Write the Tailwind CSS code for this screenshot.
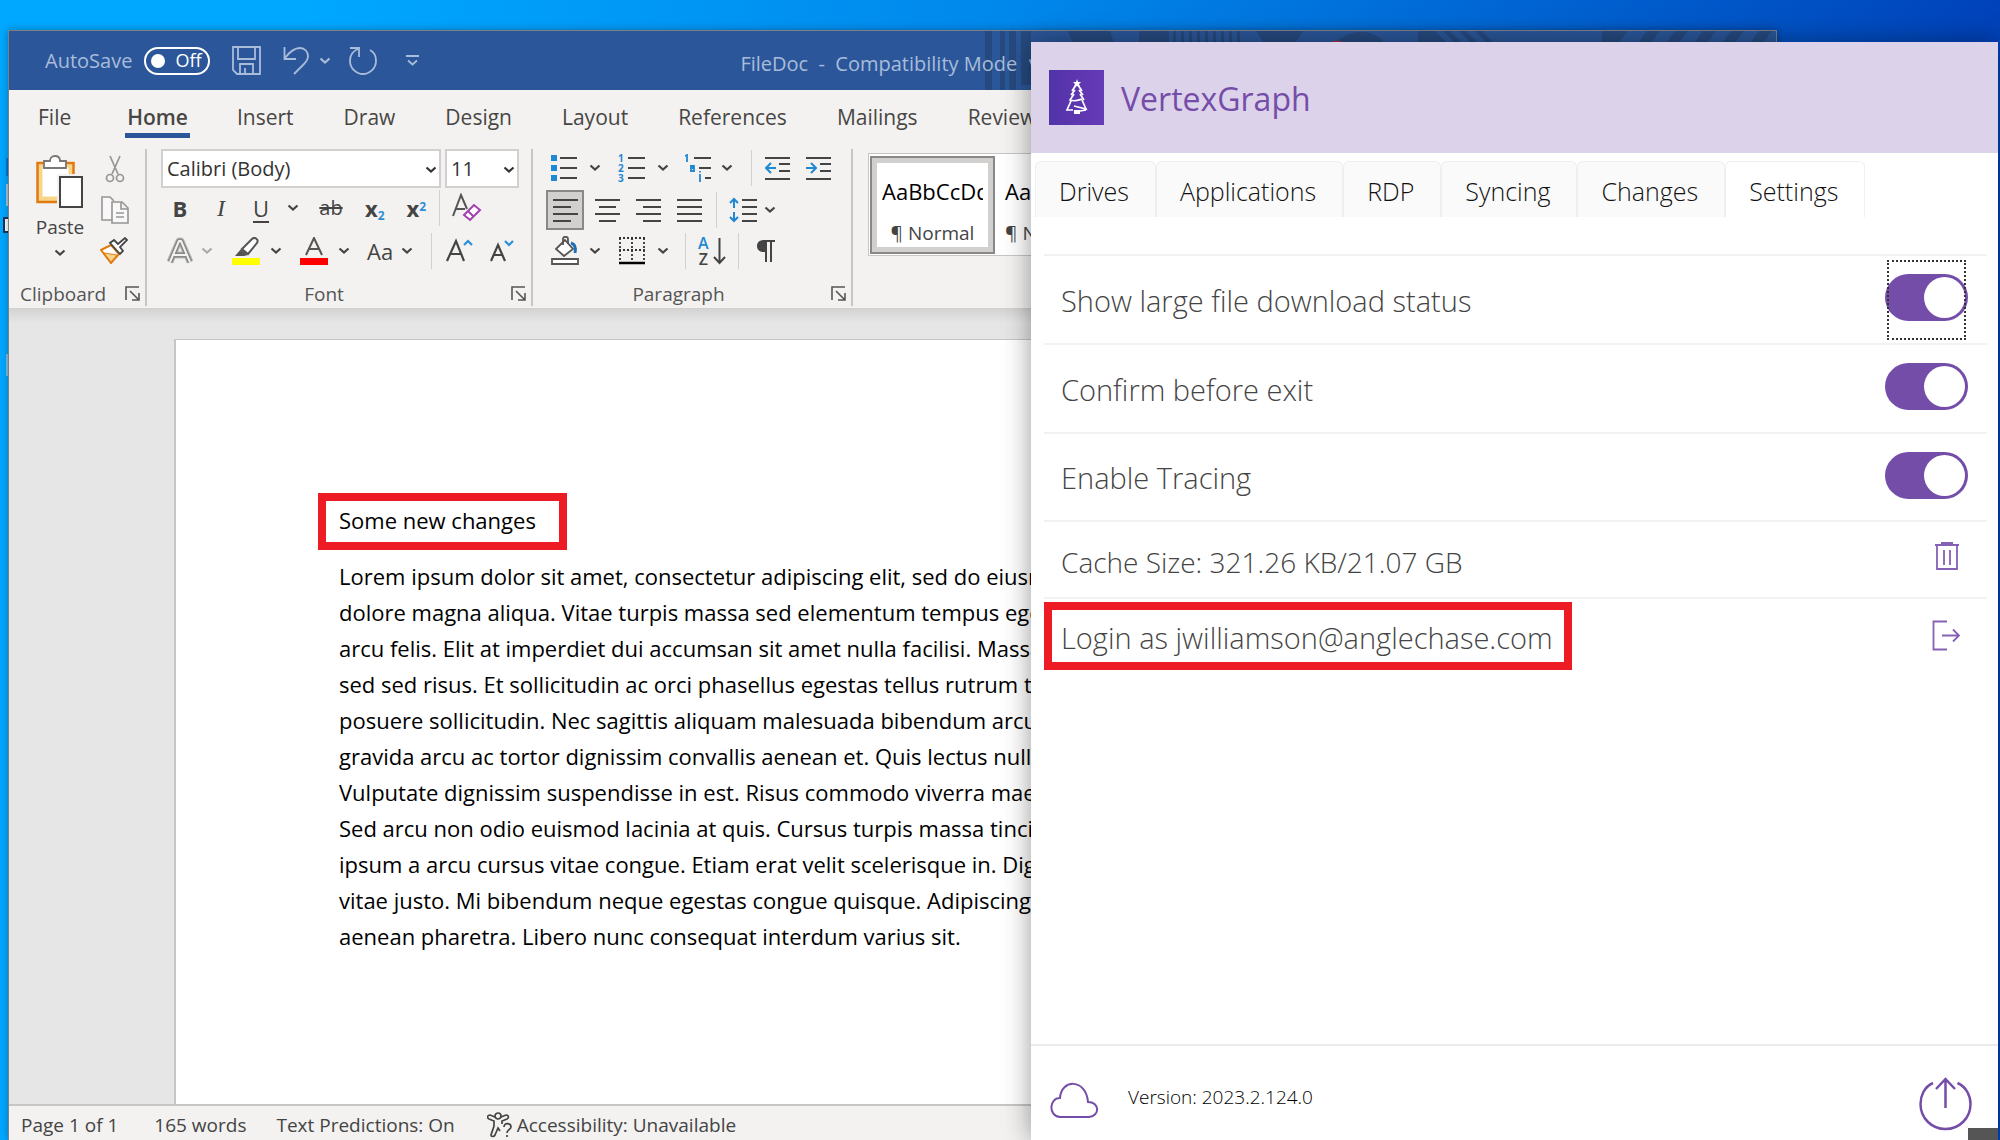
<!DOCTYPE html>
<html lang="en">
<head>
  <meta charset="UTF-8" />
  <title>FileDoc - VertexGraph</title>
  <script src="https://cdn.jsdelivr.net/npm/@tailwindcss/browser@4"></script>
</head>
<body class="relative h-screen overflow-hidden bg-linear-to-r from-[#00a8ff] from-15% via-[#0086ea] via-52% to-[#0042ba] font-['Open_Sans',sans-serif]">

  <!-- shared icons -->
  <svg class="hidden">
    <symbol id="chev" viewBox="0 0 12 8"><path d="M1.5 1.5 6 5.5l4.500-4" fill="none" stroke="currentColor" stroke-width="2.200"/></symbol>
    <symbol id="launch" viewBox="0 0 16 16"><path d="M1 14V1h13M5 5l9 9M14 7v7H7" fill="none" stroke="currentColor" stroke-width="1.600"/></symbol>
  </svg>

  <!-- desktop icons peeking out at the left -->
  <div class="absolute left-[6px] top-[158px] h-[18px] w-1 bg-[#0078d4]"></div>
  <div class="absolute left-[6px] top-[184px] h-[22px] w-1 bg-[#a8c8e0]"></div>
  <div class="absolute left-[3px] top-[217px] h-[16px] w-2 border-2 border-[#12395c] bg-white"></div>
  <div class="absolute left-[6px] top-[354px] h-[22px] w-1 bg-[#7fc0ee]"></div>

  <!-- Word window -->
  <main class="absolute left-2 right-[223px] top-[30px] bottom-0 flex flex-col overflow-hidden border border-b-0 border-[#7d7f85] bg-[#f3f2f1] text-[#444] shadow-[0_0_8px_rgba(0,0,0,0.3)]">

    <header class="relative flex h-[59px] shrink-0 items-center bg-[#2b579a] pl-9 text-[20px] text-[#a9bcda]">
      <svg class="absolute left-[976px] top-0 h-[59px] w-[792px]" viewBox="0 0 792 59" fill="#264a80">
        <path d="M0 0h7v59H0zM15 0h5v59h-5zM24 0h7v59h-7zM36 0h10v54H36zM83 0h42l4 12H88zM154 0h30v12h-30zM188 0h3v12h-3zM196 0h3v12h-3zM204 0h3v12h-3zM212 0h3v12h-3zM220 0h3v12h-3zM228 0h3v12h-3zM236 0h3v12h-3zM244 0h3v12h-3zM252 0h3v12h-3zM271 0h47l-8 12h-31zM350 12c10-9 18-11 26-11s16 2 24 11zM433 0h17l12 12h-29zM458 0h7l12 12h-7zM474 0h7l12 12h-7zM490 0h7l12 12h-7zM617 0h25l-8 12h-17zM662 0h13l-9 12h-13zM690 0h13l-9 12h-13zM718 0h13l-9 12h-13zM746 0h13l-9 12h-13zM774 0h13l-9 12h-13z"/>
        <path d="M346 12c2-3 10-3 13 0z" fill="#b5323f"/>
      </svg>
      <label for="autosave">AutoSave</label>
      <button id="autosave" class="ml-[12px] flex h-[28px] w-[66px] items-center rounded-full border-2 border-white pl-[5px] text-[18px] text-white">
        <span class="h-[14px] w-[14px] rounded-full bg-white"></span><span class="ml-[10px]">Off</span>
      </button>
      <button class="ml-[22px]" aria-label="Save">
        <svg class="h-[30px] w-[29px]" viewBox="0 0 29 30" fill="none" stroke="currentColor" stroke-width="1.800"><path d="M1 1h27v27H5l-4-4zM6 1v12h17V1M8 28V18h13v10M13 28v-6"/></svg>
      </button>
      <button class="ml-[22px]" aria-label="Undo">
        <svg class="h-[30px] w-[27px]" viewBox="0 0 27 30" fill="none" stroke="currentColor" stroke-width="1.800"><path d="M1.500 1v12H13M2 12C8 4 13 2 17 2c5 0 8 4 8 8 0 3-1 5-4 8L11 28"/></svg>
      </button>
      <button class="ml-[9px]" aria-label="Undo list"><svg class="h-[8px] w-[12px]"><use href="#chev"/></svg></button>
      <button class="ml-[17px]" aria-label="Redo">
        <svg class="h-[30px] w-[30px]" viewBox="0 0 30 30" fill="none" stroke="currentColor" stroke-width="1.800"><path d="M2 2h9v9M10 3C5 5 2 9 2 15c0 7 6 13 13 13s13-6 13-13c0-5-2-9-6-11"/></svg>
      </button>
      <button class="ml-[28px]" aria-label="Customize toolbar">
        <svg class="h-[12px] w-[13px]" viewBox="0 0 13 12" fill="none" stroke="currentColor" stroke-width="1.800"><path d="M0 1h13M2 5.500l4.500 4 4.500-4"/></svg>
      </button>
      <h1 class="relative ml-[321px] whitespace-pre pt-[6px]">FileDoc  -  Compatibility Mode  ˅</h1>
    </header>

    <nav class="flex h-[59px] shrink-0 items-center whitespace-nowrap pb-1 pl-[29px] text-[21px] text-[#484644]">
      <a href="#" class="mr-[32px]">File</a>
      <a href="#" class="relative mx-[24px] font-semibold after:absolute after:-inset-x-[2px] after:-bottom-[5px] after:h-[5px] after:bg-[#2b579a]">Home</a>
      <a href="#" class="mx-[25px]">Insert</a>
      <a href="#" class="mx-[25px]">Draw</a>
      <a href="#" class="mx-[25px]">Design</a>
      <a href="#" class="mx-[25px]">Layout</a>
      <a href="#" class="mx-[25px]">References</a>
      <a href="#" class="mx-[25px]">Mailings</a>
      <a href="#" class="mx-[25px]">Review</a>
    </nav>

    <div class="flex h-[160px] shrink-0 border-b border-[#d2d0ce] pb-[2px] text-[19px] leading-6">
      <!-- Clipboard -->
      <section class="flex w-[138px] flex-col justify-between border-r-2 border-[#c8c6c4] pl-[11px] pr-1">
        <div class="flex pt-[6px]">
          <button class="ml-[14px] flex w-[52px] flex-col items-center">
            <svg class="h-[54px] w-[48px] shrink-0" viewBox="0 0 48 54" fill="#fff"><path d="M4 10h31v34H4z" stroke="#f8d588" stroke-width="5"/><path d="M1.500 8h36v39h-36z" fill="none" stroke="#e07b12" stroke-width="2.500"/><path d="M8 13V6h6c0-3 2-5 5-5s5 2 5 5h6v7z" stroke="#797775" stroke-width="1.800"/><path d="M21 19h27v35H21z" fill="#f3f2f1"/><path d="M24 22h22v30H24z" stroke="#444" stroke-width="2"/></svg>
            <span class="mt-[6px]">Paste</span>
            <svg class="mt-[10px] h-[8px] w-[12px]"><use href="#chev"/></svg>
          </button>
          <div class="ml-[14px] flex flex-col items-center gap-[13px] text-[#979593]">
            <button aria-label="Cut"><svg class="block h-[28px] w-[20px]" viewBox="0 0 20 28" fill="none" stroke="currentColor" stroke-width="1.700"><path d="M5 1l8 18M15 1L7 19"/><circle cx="5" cy="23" r="3.500"/><circle cx="15" cy="23" r="3.500"/></svg></button>
            <button aria-label="Copy"><svg class="block h-[28px] w-[28px]" viewBox="0 0 28 28" fill="#f8f8f8" stroke="currentColor" stroke-width="1.600"><path d="M11 24H1V1h8l4 4"/><path d="M11 6h10l6 6v15H11zM20 6v7h7M15 17h8M15 21h8"/></svg></button>
            <button aria-label="Format painter"><svg class="block h-[27px] w-[29px]" viewBox="0 0 29 27"><path d="M1 13l10-5 8 9-8 9z" fill="#fff" stroke="#e07b12" stroke-width="2"/><path d="M4 16l13 2-6 7z" fill="#f8d588" stroke="#e07b12"/><path d="M10 6l10 11 3-3-3-4 7-7-2-2-7 6-4-4z" fill="#fff" stroke="#444" stroke-width="1.800"/></svg></button>
          </div>
        </div>
        <div class="flex items-center justify-between text-[#555]"><span>Clipboard</span><button aria-label="Clipboard settings"><svg class="block h-4 w-4"><use href="#launch"/></svg></button></div>
      </section>

      <!-- Font -->
      <section class="flex w-[386px] flex-col justify-between border-r-2 border-[#c8c6c4] pl-[14px] pr-1">
        <div class="flex flex-col gap-[2px]">
          <div class="flex h-[39px] gap-1 text-[20px] text-[#333]">
            <div class="relative w-[280px]">
              <select aria-label="Font name" class="h-full w-full appearance-none border-2 border-[#d2d0ce] bg-white pl-1"><option>Calibri (Body)</option></select>
              <svg class="pointer-events-none absolute right-1 top-[17px] h-[8px] w-[12px]"><use href="#chev"/></svg>
            </div>
            <div class="relative w-[74px]">
              <select aria-label="Font size" class="h-full w-full appearance-none border-2 border-[#d2d0ce] bg-white pl-1"><option>11</option></select>
              <svg class="pointer-events-none absolute right-1 top-[17px] h-[8px] w-[12px]"><use href="#chev"/></svg>
            </div>
          </div>
          <div class="flex h-[39px] items-center pb-1 text-[22px]">
            <button class="ml-[11px] w-4 font-bold">B</button>
            <button class="ml-[25px] w-4 font-['Liberation_Serif'] text-[24px] italic">I</button>
            <button class="ml-[24px] w-4 underline underline-offset-4">U</button>
            <button class="ml-[18px]" aria-label="Underline style"><svg class="h-[8px] w-[12px]"><use href="#chev"/></svg></button>
            <button class="ml-[18px] w-[28px] text-[20px] line-through">ab</button>
            <button class="ml-[20px] whitespace-nowrap font-bold">x<sub class="text-[12px] text-[#2b8fd6]">2</sub></button>
            <button class="ml-[22px] whitespace-nowrap font-bold">x<sup class="text-[12px] text-[#2b8fd6]">2</sup></button>
            <span class="ml-[13px] h-[36px] w-px bg-[#d2d0ce]"></span>
            <button class="ml-[12px]" aria-label="Clear formatting"><svg class="h-[30px] w-[30px]" viewBox="0 0 30 30" fill="none" stroke="#555" stroke-width="2"><path d="M1 23L9 2l6 14M4 16h9"/><path d="M12 22l10-10 6 5-10 10zM16 18l6 6" fill="#fff" stroke="#a33fb0"/></svg></button>
          </div>
          <div class="flex h-[39px] items-center">
            <button class="ml-[5px]" aria-label="Text effects"><svg class="h-[28px] w-[28px]" viewBox="0 0 28 28" fill="none" stroke-linejoin="round"><path d="M4 25L13 4h2l9 21M8 18h12" stroke="#bbb" stroke-width="7"/><path d="M4 25L13 4h2l9 21M8 18h12" stroke="#888" stroke-width="5"/><path d="M4 25L13 4h2l9 21M8 18h12" stroke="#f3f2f1" stroke-width="2"/></svg></button>
            <button class="ml-[7px] text-[#aaa]" aria-label="Text effects list"><svg class="h-[8px] w-[12px]"><use href="#chev"/></svg></button>
            <button class="ml-[19px]" aria-label="Highlight"><svg class="h-[28px] w-[28px]" viewBox="0 0 28 28"><path d="M10 12L20 2c3-3 7 1 5 4l-9 11z" fill="#fff" stroke="#555" stroke-width="2"/><path d="M9 12l7 6-4 1H3z" fill="#555"/><path d="M0 21h28v7H0z" fill="#ff0"/></svg></button>
            <button class="ml-[10px]" aria-label="Highlight colours"><svg class="h-[8px] w-[12px]"><use href="#chev"/></svg></button>
            <button class="ml-[18px]" aria-label="Font colour"><svg class="h-[28px] w-[28px]" viewBox="0 0 28 28"><path d="M6 18L14 1l8 17M9 12h10" fill="none" stroke="#555" stroke-width="2"/><path d="M0 21h28v7H0z" fill="#f00"/></svg></button>
            <button class="ml-[10px]" aria-label="Font colours"><svg class="h-[8px] w-[12px]"><use href="#chev"/></svg></button>
            <button class="ml-[17px] flex items-center gap-[8px] text-[22px]">Aa<svg class="h-[8px] w-[12px]"><use href="#chev"/></svg></button>
            <span class="ml-[18px] h-[36px] w-px bg-[#d2d0ce]"></span>
            <button class="ml-[14px]" aria-label="Grow font"><svg class="h-[26px] w-[28px]" viewBox="0 0 28 26" fill="none" stroke="#444" stroke-width="2.200"><path d="M1 23L10 3l8 20M4 16h11"/><path d="M18 7l4-4 4 4" stroke="#2b8fd6"/></svg></button>
            <button class="ml-[16px]" aria-label="Shrink font"><svg class="h-[26px] w-[26px]" viewBox="0 0 26 26" fill="none" stroke="#444" stroke-width="2.200"><path d="M1 23L8 7l7 16M4 17h9"/><path d="M15 3l4 4 4-4" stroke="#2b8fd6"/></svg></button>
          </div>
        </div>
        <div class="flex items-center text-[#555]"><span class="flex-1 pr-6 text-center">Font</span><button aria-label="Font settings"><svg class="block h-4 w-4"><use href="#launch"/></svg></button></div>
      </section>

      <!-- Paragraph -->
      <section class="flex w-[320px] flex-col justify-between border-r-2 border-[#c8c6c4] pl-[13px] pr-1">
        <div class="flex flex-col gap-[2px]">
          <div class="flex h-[39px] items-center pb-[2px]">
            <button class="ml-[5px]" aria-label="Bullets"><svg class="h-[28px] w-[26px]" viewBox="0 0 26 28" stroke="#444" stroke-width="2"><path d="M9 4h17M9 14h17M9 24h17"/><path d="M0 4h6M0 14h6M0 24h6" stroke="#1e88d2" stroke-width="6"/></svg></button>
            <button class="ml-[12px]" aria-label="Bullet library"><svg class="h-[8px] w-[12px]"><use href="#chev"/></svg></button>
            <button class="ml-[17px] flex items-center gap-1" aria-label="Numbering"><span class="text-[10px] font-bold leading-[10px] text-[#1e88d2]">1<br>2<br>3</span><svg class="h-[28px] w-[17px]" viewBox="0 0 17 28" stroke="#444" stroke-width="2"><path d="M0 4h17M0 14h17M0 24h17"/></svg></button>
            <button class="ml-[12px]" aria-label="Numbering library"><svg class="h-[8px] w-[12px]"><use href="#chev"/></svg></button>
            <button class="ml-[16px]" aria-label="Multilevel list"><svg class="h-[28px] w-[26px]" viewBox="0 0 26 28" fill="none" stroke="#444" stroke-width="2"><path d="M9 4h17M14 14h12M20 24h6"/><path d="M0 2l2-1v7M5 12h4v5H6v-3h3M15 20v8M15 17v1.500" stroke="#1e88d2" stroke-width="1.800"/></svg></button>
            <button class="ml-[10px]" aria-label="Multilevel library"><svg class="h-[8px] w-[12px]"><use href="#chev"/></svg></button>
            <span class="ml-[18px] h-[36px] w-px bg-[#d2d0ce]"></span>
            <button class="ml-[13px]" aria-label="Decrease indent"><svg class="h-[26px] w-[25px]" viewBox="0 0 25 26" fill="none" stroke="#444" stroke-width="2"><path d="M0 3h25M14 9h11M14 16h11M0 24h25"/><path d="M11 13H1M6 8l-5 5 5 5" stroke="#1e88d2"/></svg></button>
            <button class="ml-[16px]" aria-label="Increase indent"><svg class="h-[26px] w-[25px]" viewBox="0 0 25 26" fill="none" stroke="#444" stroke-width="2"><path d="M0 3h25M14 9h11M14 16h11M0 24h25"/><path d="M0 13h10M5 8l5 5-5 5" stroke="#1e88d2"/></svg></button>
          </div>
          <div class="flex h-[39px] items-center">
            <button class="flex h-[40px] w-[38px] items-center justify-center border-2 border-[#8a8886] bg-[#d2d0ce]" aria-label="Align left"><svg class="h-[26px] w-[25px]" viewBox="0 0 25 26" stroke="#444" stroke-width="2"><path d="M0 3h25M0 10h18M0 17h25M0 24h18"/></svg></button>
            <button class="ml-[11px]" aria-label="Center"><svg class="h-[26px] w-[25px]" viewBox="0 0 25 26" stroke="#444" stroke-width="2"><path d="M0 3h25M4 10h17M0 17h25M4 24h17"/></svg></button>
            <button class="ml-[16px]" aria-label="Align right"><svg class="h-[26px] w-[25px]" viewBox="0 0 25 26" stroke="#444" stroke-width="2"><path d="M0 3h25M7 10h18M0 17h25M7 24h18"/></svg></button>
            <button class="ml-[16px]" aria-label="Justify"><svg class="h-[26px] w-[25px]" viewBox="0 0 25 26" stroke="#444" stroke-width="2"><path d="M0 3h25M0 10h25M0 17h25M0 24h25"/></svg></button>
            <span class="ml-[14px] h-[36px] w-px bg-[#d2d0ce]"></span>
            <button class="ml-[12px]" aria-label="Line spacing"><svg class="h-[28px] w-[28px]" viewBox="0 0 28 28" fill="none" stroke="#444" stroke-width="2"><path d="M13 4h15M13 11h15M13 18h15M13 25h15"/><path d="M5 12V3M1 7l4-4 4 4M5 16v9M1 21l4 4 4-4" stroke="#1e88d2"/></svg></button>
            <button class="ml-[7px]" aria-label="Spacing options"><svg class="h-[8px] w-[12px]"><use href="#chev"/></svg></button>
          </div>
          <div class="flex h-[39px] items-center">
            <button class="ml-[5px]" aria-label="Shading"><svg class="h-[29px] w-[28px]" viewBox="0 0 28 29" fill="#fff" stroke="#555" stroke-width="1.800"><path d="M5 13l9-9 8 9-9 7z"/><path d="M12 9V3c0-3 5-3 5 0v5" fill="none"/><path d="M20 7c4 1 5 5 4 10" fill="none" stroke="#1e6fb8" stroke-width="3"/><path d="M1 23h26v5H1z"/></svg></button>
            <button class="ml-[10px]" aria-label="Shading colours"><svg class="h-[8px] w-[12px]"><use href="#chev"/></svg></button>
            <button class="ml-[18px]" aria-label="Borders"><svg class="h-[28px] w-[26px]" viewBox="0 0 26 28" fill="none" stroke="#333" stroke-width="1.800"><path d="M0 1h26M1 1v23M25 1v23M13 1v23M0 13h26" stroke-dasharray="2 2"/><path d="M0 26h26" stroke="#000" stroke-width="2.500"/></svg></button>
            <button class="ml-[12px]" aria-label="Border options"><svg class="h-[8px] w-[12px]"><use href="#chev"/></svg></button>
            <span class="ml-[16px] h-[36px] w-px bg-[#d2d0ce]"></span>
            <button class="ml-[12px] flex items-center" aria-label="Sort"><span class="text-[16px] font-semibold leading-[16px] text-[#444]"><span class="text-[#1e88d2]">A</span><br>Z</span><svg class="ml-1 h-[28px] w-[13px]" viewBox="0 0 13 28" fill="none" stroke="#444" stroke-width="2"><path d="M6.500 1v25M1 20l5.500 6 5.500-6"/></svg></button>
            <span class="ml-[12px] h-[36px] w-px bg-[#d2d0ce]"></span>
            <button class="ml-[18px]" aria-label="Show marks"><svg class="h-[24px] w-[18px]" viewBox="0 0 18 24" fill="#444"><path d="M18 1H7C3 1 0 3 0 7s3 6 7 6h1v10h2V3h3v20h2V3h3z"/></svg></button>
          </div>
        </div>
        <div class="flex items-center text-[#555]"><span class="flex-1 pr-5 text-center">Paragraph</span><button aria-label="Paragraph settings"><svg class="block h-4 w-4"><use href="#launch"/></svg></button></div>
      </section>

      <!-- Styles -->
      <section class="pl-[15px] pt-1">
        <div class="flex h-[103px] w-[600px] overflow-hidden border border-[#c8c6c4] bg-white">
          <button class="ml-px mt-[2px] flex h-[98px] w-[125px] shrink-0 border-2 border-[#8a8886] bg-[#d2d0ce] p-[5px]">
            <span class="flex h-full w-full flex-col justify-between bg-white px-[5px] pb-[2px] pt-[16px]">
              <span class="overflow-hidden whitespace-nowrap text-left text-[22px] text-black">AaBbCcDd</span>
              <span class="text-center">¶ Normal</span>
            </span>
          </button>
          <button class="flex flex-col items-start justify-between pb-[10px] pl-[10px] pt-[25px]">
            <span class="text-[22px] text-black">AaBbCcDd</span>
            <span>¶ No Spac...</span>
          </button>
        </div>
      </section>
    </div>

    <!-- document -->
    <div class="min-h-0 flex-1 bg-[#e6e6e6] bg-linear-to-b from-[#d4d4d4] to-[#e6e6e6] to-[14px] pl-[165px] pt-[30px]">
      <article class="h-full border-l-2 border-t border-[#c6c6c6] bg-white pl-[163px] pt-[153px] text-[22px] leading-[36px] text-black">
        <p class="-ml-[21px] inline-block border-8 border-[#ed1c24] pb-[4px] pl-[13px] pr-[23px] pt-px">Some new changes</p>
        <p class="mt-2 whitespace-nowrap">
          Lorem ipsum dolor sit amet, consectetur adipiscing elit, sed do eiusmod<br>
          dolore magna aliqua. Vitae turpis massa sed elementum tempus egestas<br>
          arcu felis. Elit at imperdiet dui accumsan sit amet nulla facilisi. Massa<br>
          sed sed risus. Et sollicitudin ac orci phasellus egestas tellus rutrum tellus<br>
          posuere sollicitudin. Nec sagittis aliquam malesuada bibendum arcu<br>
          gravida arcu ac tortor dignissim convallis aenean et. Quis lectus nulla<br>
          Vulputate dignissim suspendisse in est. Risus commodo viverra maecenas<br>
          Sed arcu non odio euismod lacinia at quis. Cursus turpis massa tincidunt<br>
          ipsum a arcu cursus vitae congue. Etiam erat velit scelerisque in. Dignissim<br>
          vitae justo. Mi bibendum neque egestas congue quisque. Adipiscing<br>
          aenean pharetra. Libero nunc consequat interdum varius sit.
        </p>
      </article>
    </div>

    <footer class="flex h-[36px] shrink-0 items-center border-t-2 border-[#c6c6c6] bg-[#f3f2f1] pl-[12px] pt-1 text-[19px] text-[#444]">
      <span>Page 1 of 1</span>
      <span class="ml-[36px]">165 words</span>
      <span class="ml-[30px]">Text Predictions: On</span>
      <svg class="ml-[32px] h-[26px] w-[27px]" viewBox="0 0 27 26" fill="none" stroke="#444" stroke-width="1.700"><circle cx="11" cy="4" r="3"/><path d="M8 5L3 3C0 3 0 6 2 7l5 2v5L4 23c0 2 3 2 4 0l3-7 2 3M14 5l5-2c3 0 3 3 1 4l-5 2v3M17 15c0-5 7-4 7 0 0 2-4 3-4 6M20 23v2"/></svg>
      <span class="ml-[3px]">Accessibility: Unavailable</span>
    </footer>
  </main>

  <!-- VertexGraph panel -->
  <aside class="absolute bottom-0 left-[1031px] right-[2px] top-[42px] flex flex-col bg-white font-light text-[#444] shadow-[0_0_26px_rgba(0,0,0,0.4)]">
    <header class="flex h-[111px] shrink-0 items-center gap-[17px] bg-[#dcd2ea] pl-[18px]">
      <svg class="h-[55px] w-[55px]" viewBox="0 0 55 55">
        <defs><linearGradient id="lg"><stop stop-color="#5233a8"/><stop offset="1" stop-color="#673ab7"/></linearGradient></defs>
        <path d="M0 0h55v55H0z" fill="url(#lg)"/>
        <path d="M27 15l-4 6M29 15l4 6M26 20l-4 5M30 20l4 5M25 24l-4 6c5 2 9 0 12-1M31 24l4 6M22 31l-4 9h6M33 30l4 9-12-3M31 41l6-1" fill="none" stroke="#fff" stroke-width="1.700"/>
        <path d="M28 9l1 3h3l-2 2 1 3-3-1-3 1 1-3-2-2h3zM25 40h6v4h-6z" fill="#fff"/>
      </svg>
      <h2 class="pt-[2px] text-[32px] font-normal text-[#744da9]">VertexGraph</h2>
    </header>

    <nav class="flex h-[64px] shrink-0 items-stretch pl-1 pt-2 text-[25px] text-[#111]">
      <button class="rounded-t-md border border-b-0 border-[#efefef] bg-[#fafafa] pb-1 pl-[23px] pr-[26px] pt-2">Drives</button>
      <button class="rounded-t-md border border-b-0 border-[#efefef] bg-[#fafafa] pb-1 pl-[23px] pr-[26px] pt-2">Applications</button>
      <button class="rounded-t-md border border-b-0 border-[#efefef] bg-[#fafafa] pb-1 pl-[23px] pr-[26px] pt-2">RDP</button>
      <button class="rounded-t-md border border-b-0 border-[#efefef] bg-[#fafafa] pb-1 pl-[23px] pr-[26px] pt-2">Syncing</button>
      <button class="rounded-t-md border border-b-0 border-[#efefef] bg-[#fafafa] pb-1 pl-[23px] pr-[26px] pt-2">Changes</button>
      <button class="rounded-t-md border border-b-0 border-[#efefef] bg-white pb-1 pl-[23px] pr-[26px] pt-2">Settings</button>
    </nav>

    <div class="ml-[13px] mr-[11px] mt-[37px] flex-1 text-[29px]">
      <div class="flex h-[89px] items-center justify-between border-t-2 border-[#f2f2f2] pl-[17px] pr-[19px]">
        <label for="large" class="pt-[2px]">Show large file download status</label>
        <span class="relative mb-1 flex">
          <input id="large" type="checkbox" checked class="h-[47px] w-[83px] appearance-none rounded-full bg-[#744da9] before:ml-[39px] before:mt-[3px] before:block before:h-[41px] before:w-[41px] before:rounded-full before:bg-white">
          <span class="pointer-events-none absolute inset-x-[2px] -bottom-[19px] -top-[14px] border-2 border-dotted border-[#333]"></span>
        </span>
      </div>
      <div class="flex h-[89px] items-center justify-between border-t-2 border-[#f2f2f2] pl-[17px] pr-[19px]">
        <label for="confirm" class="pt-[2px]">Confirm before exit</label>
        <input id="confirm" type="checkbox" checked class="mb-1 h-[47px] w-[83px] appearance-none rounded-full bg-[#744da9] before:ml-[39px] before:mt-[3px] before:block before:h-[41px] before:w-[41px] before:rounded-full before:bg-white">
      </div>
      <div class="flex h-[88px] items-center justify-between border-t-2 border-[#f2f2f2] pl-[17px] pr-[19px]">
        <label for="tracing" class="pt-[2px]">Enable Tracing</label>
        <input id="tracing" type="checkbox" checked class="mb-1 h-[47px] w-[83px] appearance-none rounded-full bg-[#744da9] before:ml-[39px] before:mt-[3px] before:block before:h-[41px] before:w-[41px] before:rounded-full before:bg-white">
      </div>
      <div class="flex h-[77px] items-center justify-between border-t-2 border-[#f2f2f2] pl-[17px] pr-[27px] text-[28px]">
        <span class="pt-1">Cache Size: 321.26 KB/21.07 GB</span>
        <button class="pb-2" aria-label="Clear cache"><svg class="block h-[30px] w-[26px]" viewBox="0 0 26 30" fill="none" stroke="#8560b5" stroke-width="1.800"><path d="M1 4h24M7 2h12M3 4v24h20V4M10 9v15M16 9v15"/></svg></button>
      </div>
      <div class="flex h-[75px] items-center justify-between border-t-2 border-[#f2f2f2] pr-[26px]">
        <span class="flex h-[68px] items-center border-8 border-[#ed1c24] pl-[9px] pr-[11px] pt-1">Login as jwilliamson@anglechase.com</span>
        <button aria-label="Log out"><svg class="block h-[31px] w-[29px]" viewBox="0 0 29 31" fill="none" stroke="#8560b5" stroke-width="1.800"><path d="M15 1.500H1.500v28H15M10 15.500h17M21 9.500l6 6-6 6"/></svg></button>
      </div>
    </div>

    <footer class="flex h-[96px] shrink-0 items-start border-t-2 border-[#ebebeb] pl-[19px] pr-[26px] text-[19px] text-black">
      <svg class="mt-[36px] h-[37px] w-[49px]" viewBox="0 0 49 37" fill="none" stroke="#744da9" stroke-width="2"><path d="M10 35C-2 34-1 16 10 16 11-3 36-4 38 20c12 0 12 14 1 15z"/></svg>
      <span class="ml-[29px] mt-[37px]">Version: 2023.2.124.0</span>
      <button class="ml-auto mt-[31px]" aria-label="Sync now"><svg class="block h-[54px] w-[53px]" viewBox="0 0 53 54" fill="none" stroke="#744da9" stroke-width="2.500"><path d="M14 6C5 10 1.500 19 1.500 27c0 14 11 25 25 25s25-11 25-25c0-8-4-17-13-21M26.500 31V3M17 12l9.500-10 9.500 10"/></svg></button>
    </footer>
    <div class="absolute bottom-0 right-0 h-[12px] w-[30px] bg-[#555]"></div>
  </aside>
</body>
</html>
